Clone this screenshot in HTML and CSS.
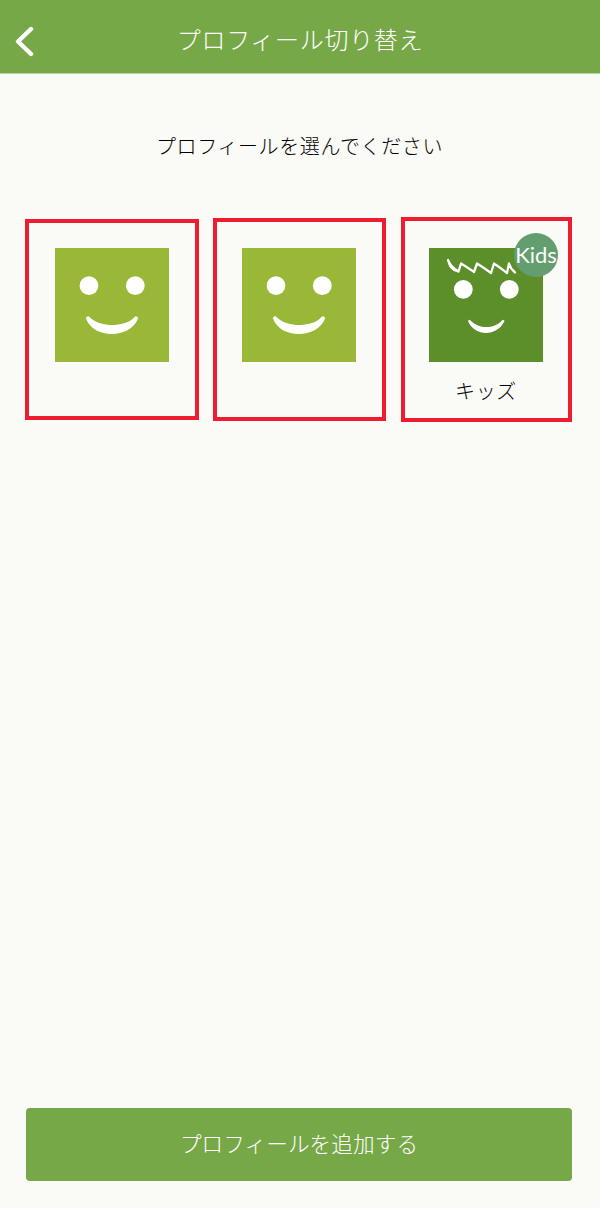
FILE: index.html
```html
<!DOCTYPE html>
<html lang="ja">
<head>
  <meta charset="UTF-8" />
  <meta name="viewport" content="width=device-width, initial-scale=1.0"/>
  <title>プロフィール切り替え</title>
  <link rel="stylesheet" href="styles.css">
</head>
<body>
  <div class="container">
    <header class="topbar">
      <a class="back-button" href="#" aria-label="戻る">
        <svg width="22" height="34" viewBox="0 0 22 34">
          <path d="M19 5 L6 17.5 L19 30" fill="none" stroke="#fff" stroke-width="4.4" stroke-linecap="round" stroke-linejoin="round"/>
        </svg>
      </a>
      <h1>プロフィール切り替え</h1>
    </header>

    <p class="lead">プロフィールを選んでください</p>

    <div class="profiles">
      <div class="profile profile-a">
        <svg class="face" width="114" height="114" viewBox="0 0 114 114">
          <rect width="114" height="114" fill="#9ab838"/>
          <circle cx="34" cy="37.7" r="9.4" fill="#fff"/>
          <circle cx="80.3" cy="37.7" r="9.4" fill="#fff"/>
          <path d="M31 70.5 a2 2 0 0 1 3.5 -1.5 C40 75 50 77 57 77 C64 77 75 75 79.5 69 a2 2 0 0 1 3.5 1.5 C79 81 68 86 57 86 C45 86 35 81 31 70.5 Z" fill="#fff"/>
        </svg>
      </div>
      <div class="profile profile-b">
        <svg class="face" width="114" height="114" viewBox="0 0 114 114">
          <rect width="114" height="114" fill="#9ab838"/>
          <circle cx="34" cy="37.7" r="9.4" fill="#fff"/>
          <circle cx="80.3" cy="37.7" r="9.4" fill="#fff"/>
          <path d="M31 70.5 a2 2 0 0 1 3.5 -1.5 C40 75 50 77 57 77 C64 77 75 75 79.5 69 a2 2 0 0 1 3.5 1.5 C79 81 68 86 57 86 C45 86 35 81 31 70.5 Z" fill="#fff"/>
        </svg>
      </div>
      <div class="profile profile-c">
        <div class="face-wrap">
          <svg class="face" width="114" height="114" viewBox="0 0 114 114">
            <rect width="114" height="114" fill="#5c8f2a"/>
            <path d="M18 11 C20 17 24 21 30 24.5 C23 24 19 19 18 11 Z" fill="#fff"/>
            <path d="M19 12 C21 17 25 21 29.5 23.5 L32 15.5 C36 18 41 21 45 24 L48 15.5 C52 18 58 22 62 25 L65 15.5 C69 18 74 22 78 25 L80 15.5 C81 19 83 22 86 24.5" fill="none" stroke="#fff" stroke-width="2.3" stroke-linejoin="round" stroke-linecap="round"/>
            <circle cx="34.3" cy="41.3" r="9.4" fill="#fff"/>
            <circle cx="80.3" cy="41.3" r="9.4" fill="#fff"/>
            <path d="M39 73 a1.4 1.4 0 0 1 2.5 -0.6 C46 77 52 79 57 79 C63 79 69 77 73 72.4 a1.4 1.4 0 0 1 2.5 0.6 C72 81 64 85 57 85 C50 85 42 81 39 73 Z" fill="#fff"/>
          </svg>
          <span class="kids-badge">Kids</span>
        </div>
        <div class="profile-name">キッズ</div>
      </div>
    </div>

    <button class="add-button">プロフィールを追加する</button>
  </div>
</body>
</html>
```

FILE: styles.css
```css
body {
  margin: 0;
  padding: 0;
  font-family: "Noto Sans CJK JP", "Noto Sans", sans-serif;
  background: #fafaf6;
  color: #000;
}
.container {
  height: 1208px;
  display: flex;
  flex-direction: column;
}
.topbar {
  box-sizing: border-box;
  height: 74px;
  padding-top: 3px;
  background: #77a847;
  border-bottom: 1px solid #bcd3a3;
  display: flex;
  align-items: center;
  justify-content: center;
  position: relative;
}
.topbar h1 {
  margin: 0;
  color: #fff;
  font-size: 24px;
  font-weight: 300;
  letter-spacing: 0.7px;
}
.back-button {
  position: absolute;
  left: 12px;
  top: 24px;
  display: block;
  height: 34px;
}
.lead {
  margin: 53px 1px 0 0;
  text-align: center;
  font-size: 20px;
  line-height: 38px;
  letter-spacing: 0.6px;
  font-weight: 300;
}
.profiles {
  margin-top: 52px;
  padding-left: 25px;
  display: flex;
  align-items: center;
  height: 205px;
}
.profile {
  box-sizing: border-box;
  border: 4px solid #ee1c2e;
}
.profile-a {
  width: 174px;
  height: 201px;
  padding: 25px 0 0 26px;
  margin-right: 14px;
}
.profile-b {
  width: 173px;
  height: 203px;
  padding: 26px 0 0 25px;
  margin-right: 15px;
}
.profile-c {
  width: 171px;
  height: 205px;
  padding: 27px 0 0 24px;
}
.face {
  display: block;
}
.face-wrap {
  position: relative;
  width: 114px;
}
.kids-badge {
  position: absolute;
  left: 85px;
  top: -15px;
  width: 44px;
  height: 44px;
  border-radius: 50%;
  background: #649d6e;
  color: #fff;
  font-family: Lato, sans-serif;
  font-size: 22px;
  line-height: 44px;
  text-align: center;
}
.profile-name {
  width: 114px;
  margin-top: 14px;
  text-align: center;
  font-size: 20px;
  line-height: 30px;
  font-weight: 300;
  letter-spacing: 0.6px;
}
.add-button {
  margin: auto 28px 27px 26px;
  height: 73px;
  padding: 0 0 4px;
  border: none;
  border-radius: 4px;
  background: #77a847;
  color: #fff;
  font-family: inherit;
  font-size: 21.6px;
  font-weight: 300;
  letter-spacing: 0.1px;
}
```
